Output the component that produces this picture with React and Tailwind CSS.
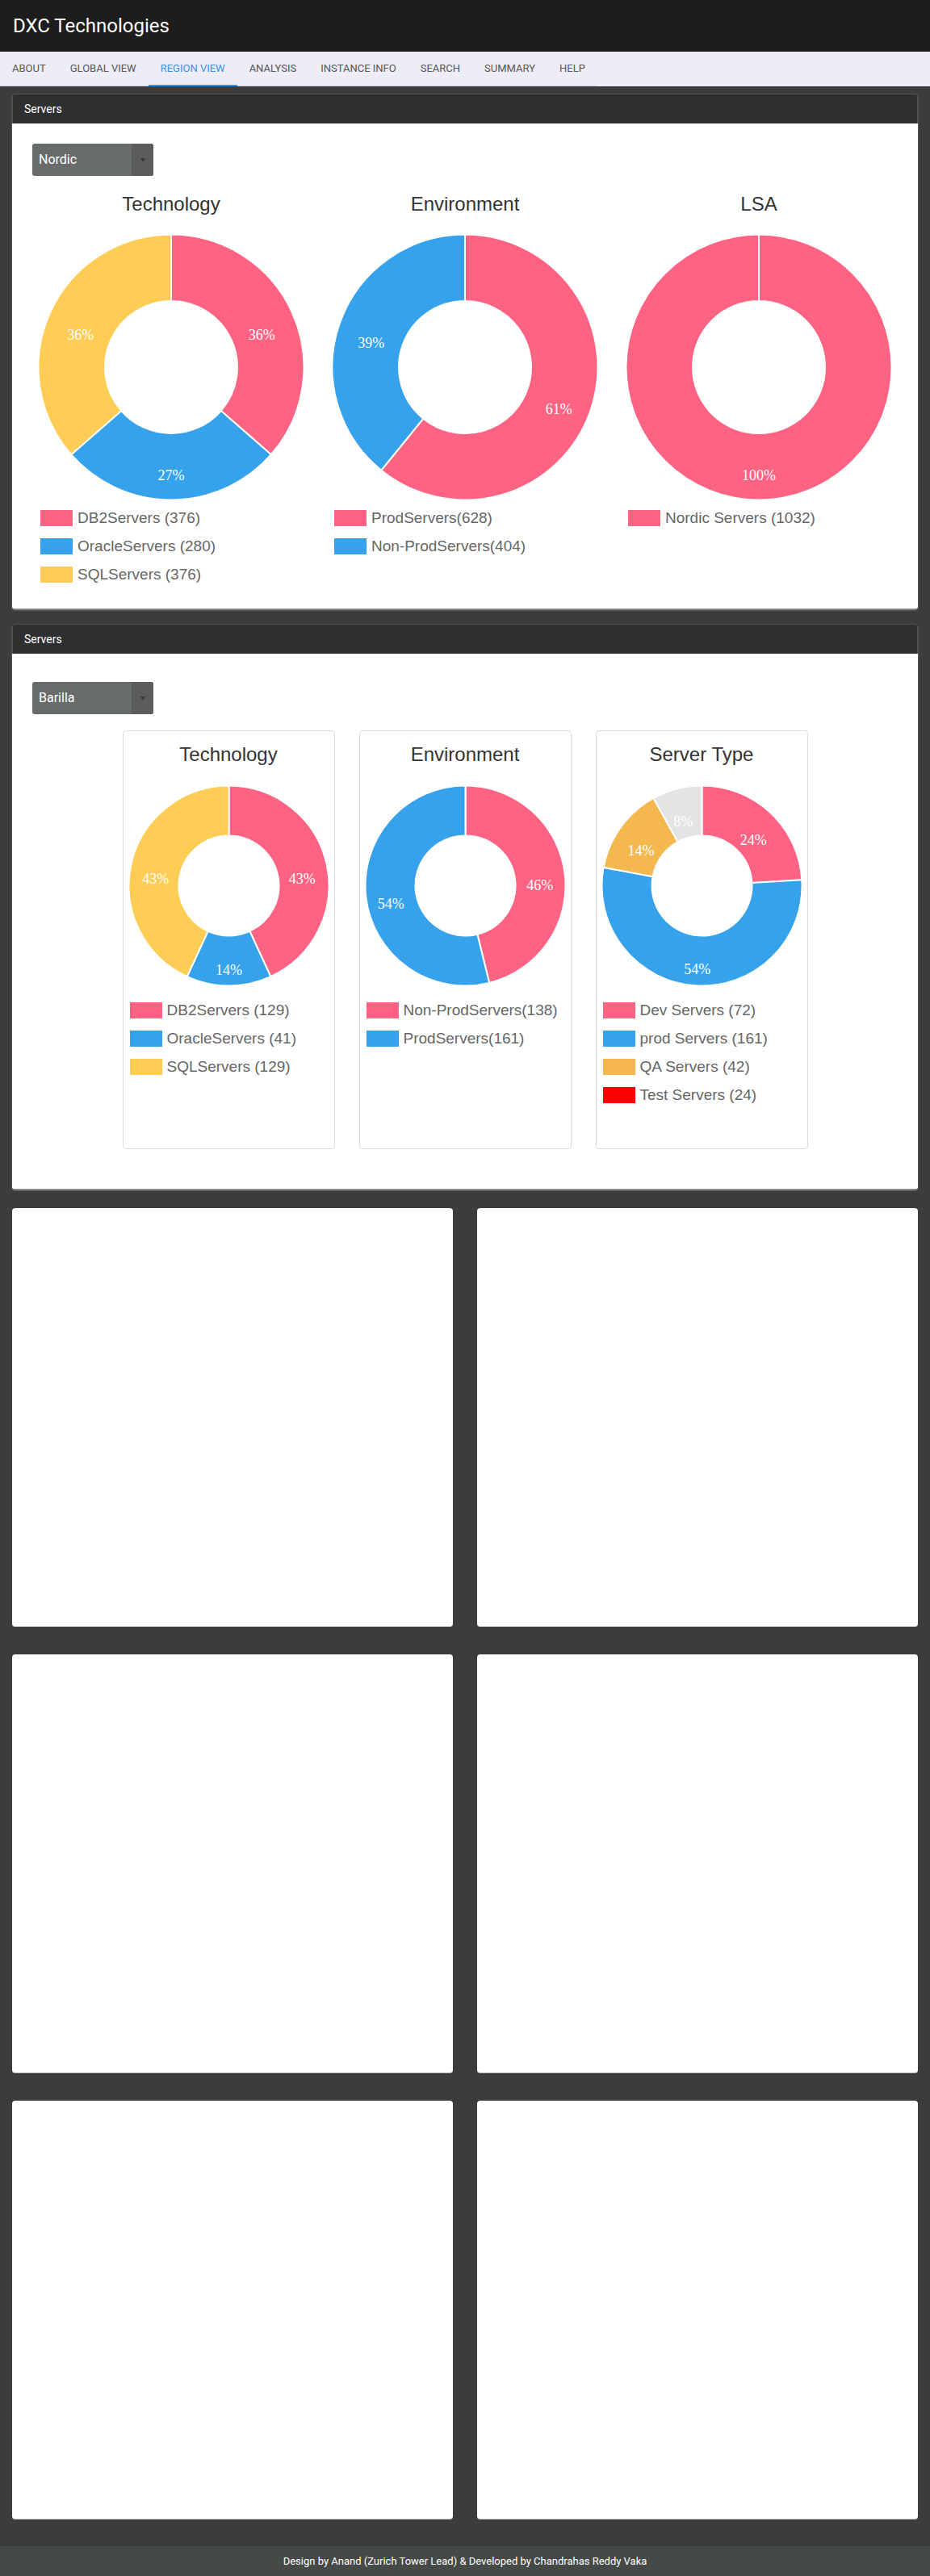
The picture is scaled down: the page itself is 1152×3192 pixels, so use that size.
import React from "react";

const PINK = "#ff6384";
const BLUE = "#36a2eb";
const YELLOW = "#ffcd56";
const ORANGE = "#f5b84e";
const LGRAY = "#e4e4e4";

function pt(cx, cy, rad, deg) {
  const a = (deg * Math.PI) / 180;
  return [cx + rad * Math.cos(a), cy + rad * Math.sin(a)];
}

function arcPath(cx, cy, R, r, a0, a1) {
  if (a1 - a0 >= 359.99) {
    return `M ${cx} ${cy - R} A ${R} ${R} 0 1 1 ${cx} ${cy + R} A ${R} ${R} 0 1 1 ${cx} ${cy - R} L ${cx} ${cy - r} A ${r} ${r} 0 1 0 ${cx} ${cy + r} A ${r} ${r} 0 1 0 ${cx} ${cy - r} Z`;
  }
  const large = a1 - a0 > 180 ? 1 : 0;
  const [x1, y1] = pt(cx, cy, R, a0);
  const [x2, y2] = pt(cx, cy, R, a1);
  const [x3, y3] = pt(cx, cy, r, a1);
  const [x4, y4] = pt(cx, cy, r, a0);
  return `M ${x1} ${y1} A ${R} ${R} 0 ${large} 1 ${x2} ${y2} L ${x3} ${y3} A ${r} ${r} 0 ${large} 0 ${x4} ${y4} Z`;
}

function Donut({ size, R, r, data }) {
  const cx = size / 2;
  const cy = size / 2;
  const total = data.reduce((s, d) => s + d.value, 0);
  let a = -90;
  const segs = data.map((d) => {
    const a0 = a;
    const a1 = a + (360 * d.value) / total;
    a = a1;
    const mid = (a0 + a1) / 2;
    const [lx, ly] = pt(cx, cy, (R + r) / 2, mid);
    return { ...d, a0, a1, lx, ly };
  });
  return (
    <svg width={size} height={size} viewBox={`0 0 ${size} ${size}`} className="block overflow-visible">
      {segs.map((s, i) => (
        <path key={i} d={arcPath(cx, cy, R, r, s.a0, s.a1)} fill={s.color} stroke="#ffffff" strokeWidth="2" />
      ))}
      {segs.map((s, i) => (
        <text
          key={"t" + i}
          x={s.lx}
          y={s.ly + 17}
          textAnchor="middle"
          fill="#ffffff"
          fontSize="18"
          fontFamily="'Liberation Serif', 'Times New Roman', serif"
        >
          {s.label}
        </text>
      ))}
    </svg>
  );
}

function Legend({ items, className }) {
  return (
    <div className={className}>
      {items.map((it, i) => (
        <div key={i} className="flex items-center h-[35px]">
          <span className="w-[40px] h-[20px] shrink-0" style={{ background: it.color }} />
          <span className="ml-[6px] text-[19px] leading-none text-[#666] whitespace-nowrap font-['Liberation_Sans',Arial,sans-serif]">
            {it.text}
          </span>
        </div>
      ))}
    </div>
  );
}

function Dropdown({ value }) {
  return (
    <div className="ml-[10px] w-[150px] h-[40px] flex rounded-[3px] overflow-hidden bg-[#676b69]">
      <div className="flex-1 flex items-center pl-[8px] text-[16px] text-white">{value}</div>
      <div className="w-[27px] flex items-center justify-center bg-[#5a5d5c]">
        <svg width="6" height="5" viewBox="0 0 6 5">
          <path d="M0 0 L6 0 L3 5 Z" fill="#3a3a3a" />
        </svg>
      </div>
    </div>
  );
}

function PanelHeader() {
  return (
    <div className="h-[37px] bg-[#2e2f31] border border-b-0 border-[#505050] rounded-t-[4px] flex items-center px-[14px] text-[14px] text-white">
      Servers
    </div>
  );
}

const tabs = ["About", "Global View", "Region View", "Analysis", "Instance Info", "Search", "Summary", "Help"];

const bigCharts = [
  {
    title: "Technology",
    data: [
      { value: 376, color: PINK, label: "36%" },
      { value: 280, color: BLUE, label: "27%" },
      { value: 376, color: YELLOW, label: "36%" },
    ],
    legend: [
      { color: PINK, text: "DB2Servers (376)" },
      { color: BLUE, text: "OracleServers (280)" },
      { color: YELLOW, text: "SQLServers (376)" },
    ],
  },
  {
    title: "Environment",
    data: [
      { value: 628, color: PINK, label: "61%" },
      { value: 404, color: BLUE, label: "39%" },
    ],
    legend: [
      { color: PINK, text: "ProdServers(628)" },
      { color: BLUE, text: "Non-ProdServers(404)" },
    ],
  },
  {
    title: "LSA",
    data: [{ value: 1032, color: PINK, label: "100%" }],
    legend: [{ color: PINK, text: "Nordic Servers (1032)" }],
  },
];

const smallCharts = [
  {
    title: "Technology",
    data: [
      { value: 129, color: PINK, label: "43%" },
      { value: 41, color: BLUE, label: "14%" },
      { value: 129, color: YELLOW, label: "43%" },
    ],
    legend: [
      { color: PINK, text: "DB2Servers (129)" },
      { color: BLUE, text: "OracleServers (41)" },
      { color: YELLOW, text: "SQLServers (129)" },
    ],
  },
  {
    title: "Environment",
    data: [
      { value: 138, color: PINK, label: "46%" },
      { value: 161, color: BLUE, label: "54%" },
    ],
    legend: [
      { color: PINK, text: "Non-ProdServers(138)" },
      { color: BLUE, text: "ProdServers(161)" },
    ],
  },
  {
    title: "Server Type",
    data: [
      { value: 72, color: PINK, label: "24%" },
      { value: 161, color: BLUE, label: "54%" },
      { value: 42, color: ORANGE, label: "14%" },
      { value: 24, color: LGRAY, label: "8%" },
    ],
    legend: [
      { color: PINK, text: "Dev Servers (72)" },
      { color: BLUE, text: "prod Servers (161)" },
      { color: ORANGE, text: "QA Servers (42)" },
      { color: "#ff0000", text: "Test Servers (24)" },
    ],
  },
];

export default function App() {
  return (
    <div className="min-h-screen bg-[#3c3c3c] font-['Roboto',sans-serif]">
      <header className="h-[64px] bg-[#1d1d1d] flex items-center px-[16px]">
        <h1 className="text-[24px] leading-none text-white font-normal">DXC Technologies</h1>
      </header>
      <nav className="h-[43px] bg-[#ededf8]">
        <div className="inline-flex h-full border-b border-[#d4d4dc]">
          {tabs.map((t) =>
            t === "Region View" ? (
              <div key={t} className="relative flex items-center px-[15px] text-[13px] uppercase text-[#3f8fe3]">
                {t}
                <span className="absolute left-0 right-0 bottom-[-1px] h-[2px] bg-[#2196f3]" />
              </div>
            ) : (
              <div key={t} className="flex items-center px-[15px] text-[13px] uppercase text-[#555]">
                {t}
              </div>
            )
          )}
        </div>
      </nav>

      <main className="px-[15px] pt-[9px]">
        <section className="rounded-[4px] shadow-[0_2px_2px_rgba(190,190,190,0.7)]">
          <PanelHeader />
          <div className="bg-white px-[15px] pt-[25px] pb-[25px] rounded-b-[2px]">
            <Dropdown value="Nordic" />
            <div className="grid grid-cols-3 mt-[23px]">
              {bigCharts.map((c) => (
                <div key={c.title} className="flex flex-col items-center">
                  <div className="h-[24px] leading-[24px] text-[24px] text-[#333] font-['Liberation_Sans',Arial,sans-serif]">
                    {c.title}
                  </div>
                  <div className="mt-[26px]">
                    <Donut size={328} R={164.5} r={82} data={c.data} />
                  </div>
                  <Legend items={c.legend} className="self-stretch pl-[20px] mt-[5px]" />
                </div>
              ))}
            </div>
          </div>
        </section>

        <section className="mt-[19px] rounded-[4px] shadow-[0_2px_2px_rgba(190,190,190,0.7)]">
          <PanelHeader />
          <div className="bg-white px-[15px] pt-[35px] pb-[49px] rounded-b-[2px]">
            <Dropdown value="Barilla" />
            <div className="flex justify-center gap-[30px] mt-[20px]">
              {smallCharts.map((c) => (
                <div
                  key={c.title}
                  className="w-[263px] h-[519px] border border-[#dcdcdc] rounded-[4px] flex flex-col items-center pt-[17px]"
                >
                  <div className="h-[24px] leading-[24px] text-[24px] text-[#333] font-['Liberation_Sans',Arial,sans-serif]">
                    {c.title}
                  </div>
                  <div className="mt-[27px]">
                    <Donut size={247} R={124} r={62} data={c.data} />
                  </div>
                  <Legend items={c.legend} className="self-stretch pl-[8px] mt-[13px]" />
                </div>
              ))}
            </div>
          </div>
        </section>

        <div className="grid grid-cols-2 gap-x-[30px] gap-y-[34px] mt-[24px]">
          {[0, 1, 2, 3, 4, 5].map((i) => (
            <div key={i} className="h-[519px] bg-white rounded-[4px] border-b border-[#c4c4c4]" />
          ))}
        </div>
      </main>

      <footer className="mt-[33px] h-[37px] bg-[#454a47] flex items-center justify-center text-white text-[13px]">
        Design by Anand (Zurich Tower Lead) &amp; Developed by Chandrahas Reddy Vaka
      </footer>
    </div>
  );
}
